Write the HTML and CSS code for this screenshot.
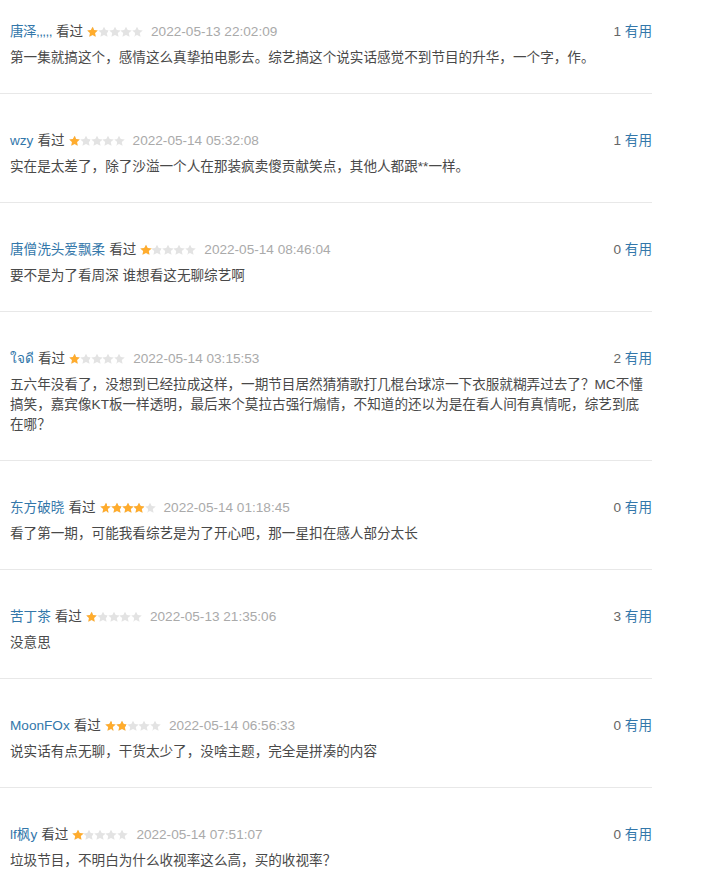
FILE: index.html
```html
<!DOCTYPE html>
<html lang="zh-CN">
<head>
<meta charset="utf-8">
<link rel="stylesheet" href="styles.css">
</head>
<body>
<div class="list">
  <div class="item first">
    <div class="head">
      <div class="info"><a class="user tight">唐泽,,,,,</a><span class="watched">看过</span><span class="stars s1"></span><span class="time">2022-05-13 22:02:09</span></div>
      <div class="vote"><span class="num">1</span> <a class="useful">有用</a></div>
    </div>
    <p class="text">第一集就搞这个，感情这么真挚拍电影去。综艺搞这个说实话感觉不到节目的升华，一个字，作。</p>
  </div>
  <div class="item">
    <div class="head">
      <div class="info"><a class="user">wzy</a><span class="watched">看过</span><span class="stars s1"></span><span class="time">2022-05-14 05:32:08</span></div>
      <div class="vote"><span class="num">1</span> <a class="useful">有用</a></div>
    </div>
    <p class="text">实在是太差了，除了沙溢一个人在那装疯卖傻贡献笑点，其他人都跟**一样。</p>
  </div>
  <div class="item">
    <div class="head">
      <div class="info"><a class="user">唐僧洗头爱飘柔</a><span class="watched">看过</span><span class="stars s1"></span><span class="time">2022-05-14 08:46:04</span></div>
      <div class="vote"><span class="num">0</span> <a class="useful">有用</a></div>
    </div>
    <p class="text">要不是为了看周深 谁想看这无聊综艺啊</p>
  </div>
  <div class="item">
    <div class="head">
      <div class="info"><a class="user">ใจดี</a><span class="watched">看过</span><span class="stars s1"></span><span class="time">2022-05-14 03:15:53</span></div>
      <div class="vote"><span class="num">2</span> <a class="useful">有用</a></div>
    </div>
    <p class="text">五六年没看了，没想到已经拉成这样，一期节目居然猜猜歌打几棍台球凉一下衣服就糊弄过去了？MC不懂搞笑，嘉宾像KT板一样透明，最后来个莫拉古强行煽情，不知道的还以为是在看人间有真情呢，综艺到底在哪？</p>
  </div>
  <div class="item">
    <div class="head">
      <div class="info"><a class="user">东方破晓</a><span class="watched">看过</span><span class="stars s4"></span><span class="time">2022-05-14 01:18:45</span></div>
      <div class="vote"><span class="num">0</span> <a class="useful">有用</a></div>
    </div>
    <p class="text">看了第一期，可能我看综艺是为了开心吧，那一星扣在感人部分太长</p>
  </div>
  <div class="item">
    <div class="head">
      <div class="info"><a class="user">苦丁茶</a><span class="watched">看过</span><span class="stars s1"></span><span class="time">2022-05-13 21:35:06</span></div>
      <div class="vote"><span class="num">3</span> <a class="useful">有用</a></div>
    </div>
    <p class="text">没意思</p>
  </div>
  <div class="item">
    <div class="head">
      <div class="info"><a class="user">MoonFOx</a><span class="watched">看过</span><span class="stars s2"></span><span class="time">2022-05-14 06:56:33</span></div>
      <div class="vote"><span class="num">0</span> <a class="useful">有用</a></div>
    </div>
    <p class="text">说实话有点无聊，干货太少了，没啥主题，完全是拼凑的内容</p>
  </div>
  <div class="item">
    <div class="head">
      <div class="info"><a class="user">lf枫y</a><span class="watched">看过</span><span class="stars s1"></span><span class="time">2022-05-14 07:51:07</span></div>
      <div class="vote"><span class="num">0</span> <a class="useful">有用</a></div>
    </div>
    <p class="text">垃圾节目，不明白为什么收视率这么高，买的收视率？</p>
  </div>
</div>
</body>
</html>
```
FILE: styles.css
```css
html, body {
  margin: 0;
  padding: 0;
  background: #fff;
}
body {
  font-family: "Liberation Sans", Arial, "Noto Sans CJK SC", sans-serif;
  font-size: 13.6px;
  color: #494949;
}
.list {
  width: 652px;
}
.item {
  padding: 37px 0 25px 10px;
  border-bottom: 1px solid #e8e8e8;
}
.item.first {
  padding-top: 22px;
}
.head {
  display: flex;
  justify-content: space-between;
  align-items: center;
  height: 20px;
  line-height: 20px;
}
.info {
  display: flex;
  align-items: center;
  gap: 4px;
}
.user, .useful {
  color: #3377aa;
  text-decoration: none;
}
.user.tight {
  letter-spacing: -0.6px;
}
.watched {
  color: #494949;
}
.time {
  color: #aaa;
  margin-left: 4px;
}
.num {
  color: #666;
}
.vote {
  white-space: pre;
}
.stars {
  display: inline-block;
  width: 56px;
  height: 12px;
  background-image: url("data:image/svg+xml;utf8,<svg xmlns='http://www.w3.org/2000/svg' width='11.2' height='12' viewBox='0 0 24 24'><path fill='%23e3e3e3' d='M12 0.5l3.5 7.3 8 1-5.9 5.6 1.5 8L12 18.5l-7.1 3.9 1.5-8L0.5 8.8l8-1z'/></svg>");
  background-size: 11.2px 12px;
  background-repeat: repeat-x;
  position: relative;
}
.stars::before {
  content: "";
  position: absolute;
  left: 0;
  top: 0;
  height: 12px;
  background-image: url("data:image/svg+xml;utf8,<svg xmlns='http://www.w3.org/2000/svg' width='11.2' height='12' viewBox='0 0 24 24'><path fill='%23ffac2d' d='M12 0.5l3.5 7.3 8 1-5.9 5.6 1.5 8L12 18.5l-7.1 3.9 1.5-8L0.5 8.8l8-1z'/></svg>");
  background-size: 11.2px 12px;
  background-repeat: repeat-x;
}
.s1::before { width: 11.2px; }
.s2::before { width: 22.4px; }
.s4::before { width: 44.8px; }
.text {
  margin: 6px 0 0 0;
  line-height: 20px;
}
```
